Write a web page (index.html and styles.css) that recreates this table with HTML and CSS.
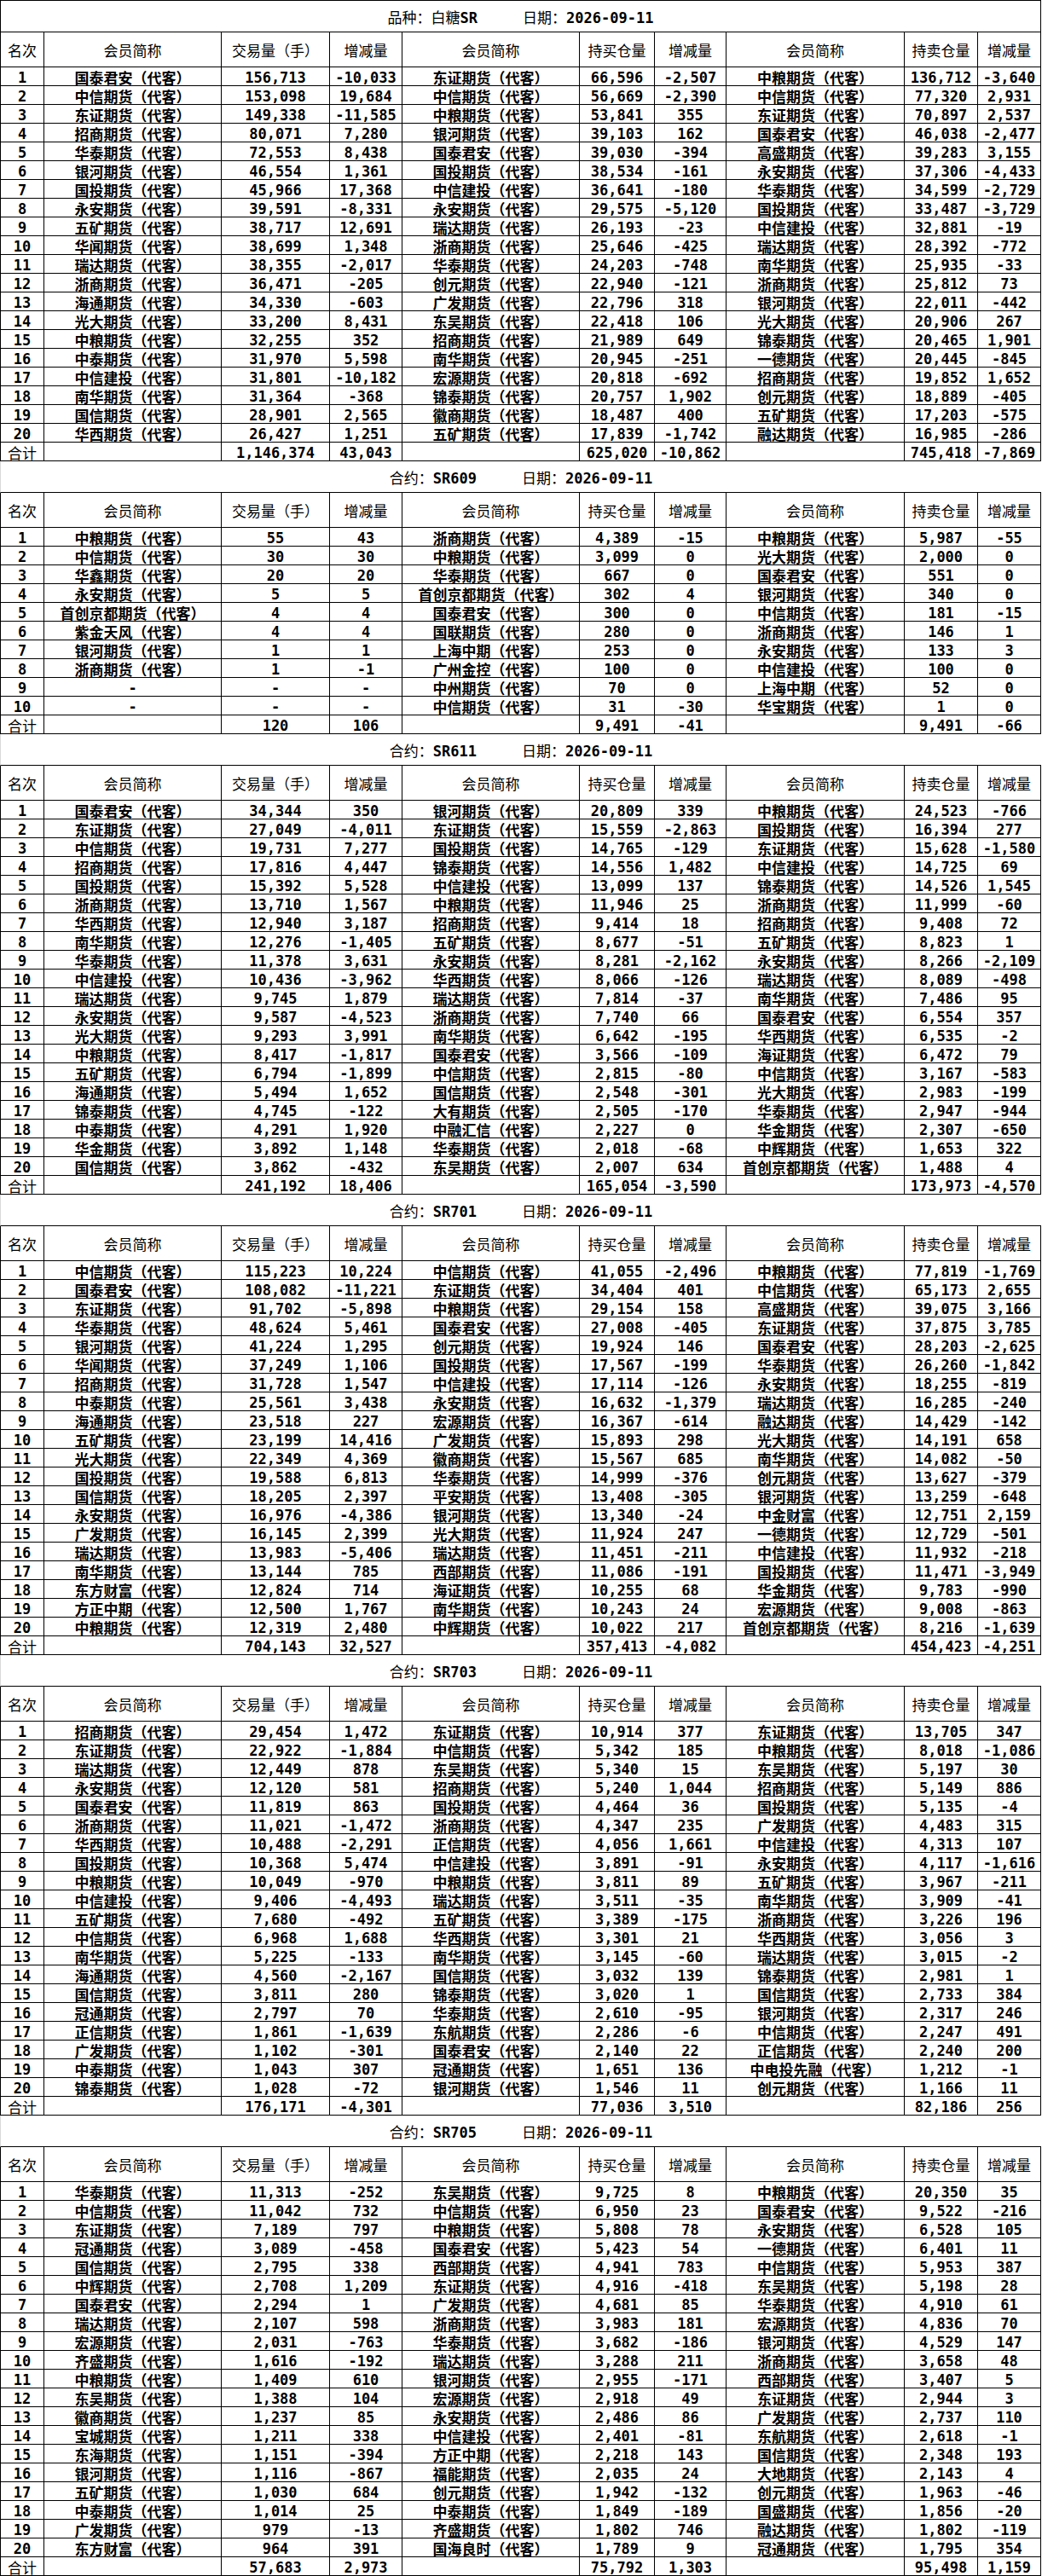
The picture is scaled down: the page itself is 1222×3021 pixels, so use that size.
FILE: index.html
```html
<!DOCTYPE html>
<html lang="zh-CN">
<head>
<meta charset="utf-8">
<title>白糖SR 会员持仓排名 2026-09-11</title>
<link rel="stylesheet" href="styles.css">
</head>
<body>
<div class="page">

<div class="t first">
<div class="ttl"><span>品种：白糖<b>SR</b></span><span>日期：<b>2026-09-11</b></span></div>
<div class="r h"><span>名次</span><span>会员简称</span><span>交易量（手）</span><span>增减量</span><span>会员简称</span><span>持买仓量</span><span>增减量</span><span>会员简称</span><span>持卖仓量</span><span>增减量</span></div>
<div class="r"><span>1</span><span>国泰君安（代客）</span><span>156,713</span><span>-10,033</span><span>东证期货（代客）</span><span>66,596</span><span>-2,507</span><span>中粮期货（代客）</span><span>136,712</span><span>-3,640</span></div>
<div class="r"><span>2</span><span>中信期货（代客）</span><span>153,098</span><span>19,684</span><span>中信期货（代客）</span><span>56,669</span><span>-2,390</span><span>中信期货（代客）</span><span>77,320</span><span>2,931</span></div>
<div class="r"><span>3</span><span>东证期货（代客）</span><span>149,338</span><span>-11,585</span><span>中粮期货（代客）</span><span>53,841</span><span>355</span><span>东证期货（代客）</span><span>70,897</span><span>2,537</span></div>
<div class="r"><span>4</span><span>招商期货（代客）</span><span>80,071</span><span>7,280</span><span>银河期货（代客）</span><span>39,103</span><span>162</span><span>国泰君安（代客）</span><span>46,038</span><span>-2,477</span></div>
<div class="r"><span>5</span><span>华泰期货（代客）</span><span>72,553</span><span>8,438</span><span>国泰君安（代客）</span><span>39,030</span><span>-394</span><span>高盛期货（代客）</span><span>39,283</span><span>3,155</span></div>
<div class="r"><span>6</span><span>银河期货（代客）</span><span>46,554</span><span>1,361</span><span>国投期货（代客）</span><span>38,534</span><span>-161</span><span>永安期货（代客）</span><span>37,306</span><span>-4,433</span></div>
<div class="r"><span>7</span><span>国投期货（代客）</span><span>45,966</span><span>17,368</span><span>中信建投（代客）</span><span>36,641</span><span>-180</span><span>华泰期货（代客）</span><span>34,599</span><span>-2,729</span></div>
<div class="r"><span>8</span><span>永安期货（代客）</span><span>39,591</span><span>-8,331</span><span>永安期货（代客）</span><span>29,575</span><span>-5,120</span><span>国投期货（代客）</span><span>33,487</span><span>-3,729</span></div>
<div class="r"><span>9</span><span>五矿期货（代客）</span><span>38,717</span><span>12,691</span><span>瑞达期货（代客）</span><span>26,193</span><span>-23</span><span>中信建投（代客）</span><span>32,881</span><span>-19</span></div>
<div class="r"><span>10</span><span>华闻期货（代客）</span><span>38,699</span><span>1,348</span><span>浙商期货（代客）</span><span>25,646</span><span>-425</span><span>瑞达期货（代客）</span><span>28,392</span><span>-772</span></div>
<div class="r"><span>11</span><span>瑞达期货（代客）</span><span>38,355</span><span>-2,017</span><span>华泰期货（代客）</span><span>24,203</span><span>-748</span><span>南华期货（代客）</span><span>25,935</span><span>-33</span></div>
<div class="r"><span>12</span><span>浙商期货（代客）</span><span>36,471</span><span>-205</span><span>创元期货（代客）</span><span>22,940</span><span>-121</span><span>浙商期货（代客）</span><span>25,812</span><span>73</span></div>
<div class="r"><span>13</span><span>海通期货（代客）</span><span>34,330</span><span>-603</span><span>广发期货（代客）</span><span>22,796</span><span>318</span><span>银河期货（代客）</span><span>22,011</span><span>-442</span></div>
<div class="r"><span>14</span><span>光大期货（代客）</span><span>33,200</span><span>8,431</span><span>东吴期货（代客）</span><span>22,418</span><span>106</span><span>光大期货（代客）</span><span>20,906</span><span>267</span></div>
<div class="r"><span>15</span><span>中粮期货（代客）</span><span>32,255</span><span>352</span><span>招商期货（代客）</span><span>21,989</span><span>649</span><span>锦泰期货（代客）</span><span>20,465</span><span>1,901</span></div>
<div class="r"><span>16</span><span>中泰期货（代客）</span><span>31,970</span><span>5,598</span><span>南华期货（代客）</span><span>20,945</span><span>-251</span><span>一德期货（代客）</span><span>20,445</span><span>-845</span></div>
<div class="r"><span>17</span><span>中信建投（代客）</span><span>31,801</span><span>-10,182</span><span>宏源期货（代客）</span><span>20,818</span><span>-692</span><span>招商期货（代客）</span><span>19,852</span><span>1,652</span></div>
<div class="r"><span>18</span><span>南华期货（代客）</span><span>31,364</span><span>-368</span><span>锦泰期货（代客）</span><span>20,757</span><span>1,902</span><span>创元期货（代客）</span><span>18,889</span><span>-405</span></div>
<div class="r"><span>19</span><span>国信期货（代客）</span><span>28,901</span><span>2,565</span><span>徽商期货（代客）</span><span>18,487</span><span>400</span><span>五矿期货（代客）</span><span>17,203</span><span>-575</span></div>
<div class="r"><span>20</span><span>华西期货（代客）</span><span>26,427</span><span>1,251</span><span>五矿期货（代客）</span><span>17,839</span><span>-1,742</span><span>融达期货（代客）</span><span>16,985</span><span>-286</span></div>
<div class="r s"><span>合计</span><span></span><span>1,146,374</span><span>43,043</span><span></span><span>625,020</span><span>-10,862</span><span></span><span>745,418</span><span>-7,869</span></div>
</div>

<div class="t">
<div class="ttl"><span>合约：<b>SR609</b></span><span>日期：<b>2026-09-11</b></span></div>
<div class="r h"><span>名次</span><span>会员简称</span><span>交易量（手）</span><span>增减量</span><span>会员简称</span><span>持买仓量</span><span>增减量</span><span>会员简称</span><span>持卖仓量</span><span>增减量</span></div>
<div class="r"><span>1</span><span>中粮期货（代客）</span><span>55</span><span>43</span><span>浙商期货（代客）</span><span>4,389</span><span>-15</span><span>中粮期货（代客）</span><span>5,987</span><span>-55</span></div>
<div class="r"><span>2</span><span>中信期货（代客）</span><span>30</span><span>30</span><span>中粮期货（代客）</span><span>3,099</span><span>0</span><span>光大期货（代客）</span><span>2,000</span><span>0</span></div>
<div class="r"><span>3</span><span>华鑫期货（代客）</span><span>20</span><span>20</span><span>华泰期货（代客）</span><span>667</span><span>0</span><span>国泰君安（代客）</span><span>551</span><span>0</span></div>
<div class="r"><span>4</span><span>永安期货（代客）</span><span>5</span><span>5</span><span>首创京都期货（代客）</span><span>302</span><span>4</span><span>银河期货（代客）</span><span>340</span><span>0</span></div>
<div class="r"><span>5</span><span>首创京都期货（代客）</span><span>4</span><span>4</span><span>国泰君安（代客）</span><span>300</span><span>0</span><span>中信期货（代客）</span><span>181</span><span>-15</span></div>
<div class="r"><span>6</span><span>紫金天风（代客）</span><span>4</span><span>4</span><span>国联期货（代客）</span><span>280</span><span>0</span><span>浙商期货（代客）</span><span>146</span><span>1</span></div>
<div class="r"><span>7</span><span>银河期货（代客）</span><span>1</span><span>1</span><span>上海中期（代客）</span><span>253</span><span>0</span><span>永安期货（代客）</span><span>133</span><span>3</span></div>
<div class="r"><span>8</span><span>浙商期货（代客）</span><span>1</span><span>-1</span><span>广州金控（代客）</span><span>100</span><span>0</span><span>中信建投（代客）</span><span>100</span><span>0</span></div>
<div class="r"><span>9</span><span class="dash">-</span><span>-</span><span>-</span><span>中州期货（代客）</span><span>70</span><span>0</span><span>上海中期（代客）</span><span>52</span><span>0</span></div>
<div class="r"><span>10</span><span class="dash">-</span><span>-</span><span>-</span><span>中信期货（代客）</span><span>31</span><span>-30</span><span>华宝期货（代客）</span><span>1</span><span>0</span></div>
<div class="r s"><span>合计</span><span></span><span>120</span><span>106</span><span></span><span>9,491</span><span>-41</span><span></span><span>9,491</span><span>-66</span></div>
</div>

<div class="t">
<div class="ttl"><span>合约：<b>SR611</b></span><span>日期：<b>2026-09-11</b></span></div>
<div class="r h"><span>名次</span><span>会员简称</span><span>交易量（手）</span><span>增减量</span><span>会员简称</span><span>持买仓量</span><span>增减量</span><span>会员简称</span><span>持卖仓量</span><span>增减量</span></div>
<div class="r"><span>1</span><span>国泰君安（代客）</span><span>34,344</span><span>350</span><span>银河期货（代客）</span><span>20,809</span><span>339</span><span>中粮期货（代客）</span><span>24,523</span><span>-766</span></div>
<div class="r"><span>2</span><span>东证期货（代客）</span><span>27,049</span><span>-4,011</span><span>东证期货（代客）</span><span>15,559</span><span>-2,863</span><span>国投期货（代客）</span><span>16,394</span><span>277</span></div>
<div class="r"><span>3</span><span>中信期货（代客）</span><span>19,731</span><span>7,277</span><span>国投期货（代客）</span><span>14,765</span><span>-129</span><span>东证期货（代客）</span><span>15,628</span><span>-1,580</span></div>
<div class="r"><span>4</span><span>招商期货（代客）</span><span>17,816</span><span>4,447</span><span>锦泰期货（代客）</span><span>14,556</span><span>1,482</span><span>中信建投（代客）</span><span>14,725</span><span>69</span></div>
<div class="r"><span>5</span><span>国投期货（代客）</span><span>15,392</span><span>5,528</span><span>中信建投（代客）</span><span>13,099</span><span>137</span><span>锦泰期货（代客）</span><span>14,526</span><span>1,545</span></div>
<div class="r"><span>6</span><span>浙商期货（代客）</span><span>13,710</span><span>1,567</span><span>中粮期货（代客）</span><span>11,946</span><span>25</span><span>浙商期货（代客）</span><span>11,999</span><span>-60</span></div>
<div class="r"><span>7</span><span>华西期货（代客）</span><span>12,940</span><span>3,187</span><span>招商期货（代客）</span><span>9,414</span><span>18</span><span>招商期货（代客）</span><span>9,408</span><span>72</span></div>
<div class="r"><span>8</span><span>南华期货（代客）</span><span>12,276</span><span>-1,405</span><span>五矿期货（代客）</span><span>8,677</span><span>-51</span><span>五矿期货（代客）</span><span>8,823</span><span>1</span></div>
<div class="r"><span>9</span><span>华泰期货（代客）</span><span>11,378</span><span>3,631</span><span>永安期货（代客）</span><span>8,281</span><span>-2,162</span><span>永安期货（代客）</span><span>8,266</span><span>-2,109</span></div>
<div class="r"><span>10</span><span>中信建投（代客）</span><span>10,436</span><span>-3,962</span><span>华西期货（代客）</span><span>8,066</span><span>-126</span><span>瑞达期货（代客）</span><span>8,089</span><span>-498</span></div>
<div class="r"><span>11</span><span>瑞达期货（代客）</span><span>9,745</span><span>1,879</span><span>瑞达期货（代客）</span><span>7,814</span><span>-37</span><span>南华期货（代客）</span><span>7,486</span><span>95</span></div>
<div class="r"><span>12</span><span>永安期货（代客）</span><span>9,587</span><span>-4,523</span><span>浙商期货（代客）</span><span>7,740</span><span>66</span><span>国泰君安（代客）</span><span>6,554</span><span>357</span></div>
<div class="r"><span>13</span><span>光大期货（代客）</span><span>9,293</span><span>3,991</span><span>南华期货（代客）</span><span>6,642</span><span>-195</span><span>华西期货（代客）</span><span>6,535</span><span>-2</span></div>
<div class="r"><span>14</span><span>中粮期货（代客）</span><span>8,417</span><span>-1,817</span><span>国泰君安（代客）</span><span>3,566</span><span>-109</span><span>海证期货（代客）</span><span>6,472</span><span>79</span></div>
<div class="r"><span>15</span><span>五矿期货（代客）</span><span>6,794</span><span>-1,899</span><span>中信期货（代客）</span><span>2,815</span><span>-80</span><span>中信期货（代客）</span><span>3,167</span><span>-583</span></div>
<div class="r"><span>16</span><span>海通期货（代客）</span><span>5,494</span><span>1,652</span><span>国信期货（代客）</span><span>2,548</span><span>-301</span><span>光大期货（代客）</span><span>2,983</span><span>-199</span></div>
<div class="r"><span>17</span><span>锦泰期货（代客）</span><span>4,745</span><span>-122</span><span>大有期货（代客）</span><span>2,505</span><span>-170</span><span>华泰期货（代客）</span><span>2,947</span><span>-944</span></div>
<div class="r"><span>18</span><span>中泰期货（代客）</span><span>4,291</span><span>1,920</span><span>中融汇信（代客）</span><span>2,227</span><span>0</span><span>华金期货（代客）</span><span>2,307</span><span>-650</span></div>
<div class="r"><span>19</span><span>华金期货（代客）</span><span>3,892</span><span>1,148</span><span>华泰期货（代客）</span><span>2,018</span><span>-68</span><span>中辉期货（代客）</span><span>1,653</span><span>322</span></div>
<div class="r"><span>20</span><span>国信期货（代客）</span><span>3,862</span><span>-432</span><span>东吴期货（代客）</span><span>2,007</span><span>634</span><span>首创京都期货（代客）</span><span>1,488</span><span>4</span></div>
<div class="r s"><span>合计</span><span></span><span>241,192</span><span>18,406</span><span></span><span>165,054</span><span>-3,590</span><span></span><span>173,973</span><span>-4,570</span></div>
</div>

<div class="t">
<div class="ttl"><span>合约：<b>SR701</b></span><span>日期：<b>2026-09-11</b></span></div>
<div class="r h"><span>名次</span><span>会员简称</span><span>交易量（手）</span><span>增减量</span><span>会员简称</span><span>持买仓量</span><span>增减量</span><span>会员简称</span><span>持卖仓量</span><span>增减量</span></div>
<div class="r"><span>1</span><span>中信期货（代客）</span><span>115,223</span><span>10,224</span><span>中信期货（代客）</span><span>41,055</span><span>-2,496</span><span>中粮期货（代客）</span><span>77,819</span><span>-1,769</span></div>
<div class="r"><span>2</span><span>国泰君安（代客）</span><span>108,082</span><span>-11,221</span><span>东证期货（代客）</span><span>34,404</span><span>401</span><span>中信期货（代客）</span><span>65,173</span><span>2,655</span></div>
<div class="r"><span>3</span><span>东证期货（代客）</span><span>91,702</span><span>-5,898</span><span>中粮期货（代客）</span><span>29,154</span><span>158</span><span>高盛期货（代客）</span><span>39,075</span><span>3,166</span></div>
<div class="r"><span>4</span><span>华泰期货（代客）</span><span>48,624</span><span>5,461</span><span>国泰君安（代客）</span><span>27,008</span><span>-405</span><span>东证期货（代客）</span><span>37,875</span><span>3,785</span></div>
<div class="r"><span>5</span><span>银河期货（代客）</span><span>41,224</span><span>1,295</span><span>创元期货（代客）</span><span>19,924</span><span>146</span><span>国泰君安（代客）</span><span>28,203</span><span>-2,625</span></div>
<div class="r"><span>6</span><span>华闻期货（代客）</span><span>37,249</span><span>1,106</span><span>国投期货（代客）</span><span>17,567</span><span>-199</span><span>华泰期货（代客）</span><span>26,260</span><span>-1,842</span></div>
<div class="r"><span>7</span><span>招商期货（代客）</span><span>31,728</span><span>1,547</span><span>中信建投（代客）</span><span>17,114</span><span>-126</span><span>永安期货（代客）</span><span>18,255</span><span>-819</span></div>
<div class="r"><span>8</span><span>中泰期货（代客）</span><span>25,561</span><span>3,438</span><span>永安期货（代客）</span><span>16,632</span><span>-1,379</span><span>瑞达期货（代客）</span><span>16,285</span><span>-240</span></div>
<div class="r"><span>9</span><span>海通期货（代客）</span><span>23,518</span><span>227</span><span>宏源期货（代客）</span><span>16,367</span><span>-614</span><span>融达期货（代客）</span><span>14,429</span><span>-142</span></div>
<div class="r"><span>10</span><span>五矿期货（代客）</span><span>23,199</span><span>14,416</span><span>广发期货（代客）</span><span>15,893</span><span>298</span><span>光大期货（代客）</span><span>14,191</span><span>658</span></div>
<div class="r"><span>11</span><span>光大期货（代客）</span><span>22,349</span><span>4,369</span><span>徽商期货（代客）</span><span>15,567</span><span>685</span><span>南华期货（代客）</span><span>14,082</span><span>-50</span></div>
<div class="r"><span>12</span><span>国投期货（代客）</span><span>19,588</span><span>6,813</span><span>华泰期货（代客）</span><span>14,999</span><span>-376</span><span>创元期货（代客）</span><span>13,627</span><span>-379</span></div>
<div class="r"><span>13</span><span>国信期货（代客）</span><span>18,205</span><span>2,397</span><span>平安期货（代客）</span><span>13,408</span><span>-305</span><span>银河期货（代客）</span><span>13,259</span><span>-648</span></div>
<div class="r"><span>14</span><span>永安期货（代客）</span><span>16,976</span><span>-4,386</span><span>银河期货（代客）</span><span>13,340</span><span>-24</span><span>中金财富（代客）</span><span>12,751</span><span>2,159</span></div>
<div class="r"><span>15</span><span>广发期货（代客）</span><span>16,145</span><span>2,399</span><span>光大期货（代客）</span><span>11,924</span><span>247</span><span>一德期货（代客）</span><span>12,729</span><span>-501</span></div>
<div class="r"><span>16</span><span>瑞达期货（代客）</span><span>13,983</span><span>-5,406</span><span>瑞达期货（代客）</span><span>11,451</span><span>-211</span><span>中信建投（代客）</span><span>11,932</span><span>-218</span></div>
<div class="r"><span>17</span><span>南华期货（代客）</span><span>13,144</span><span>785</span><span>西部期货（代客）</span><span>11,086</span><span>-191</span><span>国投期货（代客）</span><span>11,471</span><span>-3,949</span></div>
<div class="r"><span>18</span><span>东方财富（代客）</span><span>12,824</span><span>714</span><span>海证期货（代客）</span><span>10,255</span><span>68</span><span>华金期货（代客）</span><span>9,783</span><span>-990</span></div>
<div class="r"><span>19</span><span>方正中期（代客）</span><span>12,500</span><span>1,767</span><span>南华期货（代客）</span><span>10,243</span><span>24</span><span>宏源期货（代客）</span><span>9,008</span><span>-863</span></div>
<div class="r"><span>20</span><span>中粮期货（代客）</span><span>12,319</span><span>2,480</span><span>中辉期货（代客）</span><span>10,022</span><span>217</span><span>首创京都期货（代客）</span><span>8,216</span><span>-1,639</span></div>
<div class="r s"><span>合计</span><span></span><span>704,143</span><span>32,527</span><span></span><span>357,413</span><span>-4,082</span><span></span><span>454,423</span><span>-4,251</span></div>
</div>

<div class="t">
<div class="ttl"><span>合约：<b>SR703</b></span><span>日期：<b>2026-09-11</b></span></div>
<div class="r h"><span>名次</span><span>会员简称</span><span>交易量（手）</span><span>增减量</span><span>会员简称</span><span>持买仓量</span><span>增减量</span><span>会员简称</span><span>持卖仓量</span><span>增减量</span></div>
<div class="r"><span>1</span><span>招商期货（代客）</span><span>29,454</span><span>1,472</span><span>东证期货（代客）</span><span>10,914</span><span>377</span><span>东证期货（代客）</span><span>13,705</span><span>347</span></div>
<div class="r"><span>2</span><span>东证期货（代客）</span><span>22,922</span><span>-1,884</span><span>中信期货（代客）</span><span>5,342</span><span>185</span><span>中粮期货（代客）</span><span>8,018</span><span>-1,086</span></div>
<div class="r"><span>3</span><span>瑞达期货（代客）</span><span>12,449</span><span>878</span><span>东吴期货（代客）</span><span>5,340</span><span>15</span><span>东吴期货（代客）</span><span>5,197</span><span>30</span></div>
<div class="r"><span>4</span><span>永安期货（代客）</span><span>12,120</span><span>581</span><span>招商期货（代客）</span><span>5,240</span><span>1,044</span><span>招商期货（代客）</span><span>5,149</span><span>886</span></div>
<div class="r"><span>5</span><span>国泰君安（代客）</span><span>11,819</span><span>863</span><span>国投期货（代客）</span><span>4,464</span><span>36</span><span>国投期货（代客）</span><span>5,135</span><span>-4</span></div>
<div class="r"><span>6</span><span>浙商期货（代客）</span><span>11,021</span><span>-1,472</span><span>浙商期货（代客）</span><span>4,347</span><span>235</span><span>广发期货（代客）</span><span>4,483</span><span>315</span></div>
<div class="r"><span>7</span><span>华西期货（代客）</span><span>10,488</span><span>-2,291</span><span>正信期货（代客）</span><span>4,056</span><span>1,661</span><span>中信建投（代客）</span><span>4,313</span><span>107</span></div>
<div class="r"><span>8</span><span>国投期货（代客）</span><span>10,368</span><span>5,474</span><span>中信建投（代客）</span><span>3,891</span><span>-91</span><span>永安期货（代客）</span><span>4,117</span><span>-1,616</span></div>
<div class="r"><span>9</span><span>中粮期货（代客）</span><span>10,049</span><span>-970</span><span>中粮期货（代客）</span><span>3,811</span><span>89</span><span>五矿期货（代客）</span><span>3,967</span><span>-211</span></div>
<div class="r"><span>10</span><span>中信建投（代客）</span><span>9,406</span><span>-4,493</span><span>瑞达期货（代客）</span><span>3,511</span><span>-35</span><span>南华期货（代客）</span><span>3,909</span><span>-41</span></div>
<div class="r"><span>11</span><span>五矿期货（代客）</span><span>7,680</span><span>-492</span><span>五矿期货（代客）</span><span>3,389</span><span>-175</span><span>浙商期货（代客）</span><span>3,226</span><span>196</span></div>
<div class="r"><span>12</span><span>中信期货（代客）</span><span>6,968</span><span>1,688</span><span>华西期货（代客）</span><span>3,301</span><span>21</span><span>华西期货（代客）</span><span>3,056</span><span>3</span></div>
<div class="r"><span>13</span><span>南华期货（代客）</span><span>5,225</span><span>-133</span><span>南华期货（代客）</span><span>3,145</span><span>-60</span><span>瑞达期货（代客）</span><span>3,015</span><span>-2</span></div>
<div class="r"><span>14</span><span>海通期货（代客）</span><span>4,560</span><span>-2,167</span><span>国信期货（代客）</span><span>3,032</span><span>139</span><span>锦泰期货（代客）</span><span>2,981</span><span>1</span></div>
<div class="r"><span>15</span><span>国信期货（代客）</span><span>3,811</span><span>280</span><span>锦泰期货（代客）</span><span>3,020</span><span>1</span><span>国信期货（代客）</span><span>2,733</span><span>384</span></div>
<div class="r"><span>16</span><span>冠通期货（代客）</span><span>2,797</span><span>70</span><span>华泰期货（代客）</span><span>2,610</span><span>-95</span><span>银河期货（代客）</span><span>2,317</span><span>246</span></div>
<div class="r"><span>17</span><span>正信期货（代客）</span><span>1,861</span><span>-1,639</span><span>东航期货（代客）</span><span>2,286</span><span>-6</span><span>中信期货（代客）</span><span>2,247</span><span>491</span></div>
<div class="r"><span>18</span><span>广发期货（代客）</span><span>1,102</span><span>-301</span><span>国泰君安（代客）</span><span>2,140</span><span>22</span><span>正信期货（代客）</span><span>2,240</span><span>200</span></div>
<div class="r"><span>19</span><span>中泰期货（代客）</span><span>1,043</span><span>307</span><span>冠通期货（代客）</span><span>1,651</span><span>136</span><span>中电投先融（代客）</span><span>1,212</span><span>-1</span></div>
<div class="r"><span>20</span><span>锦泰期货（代客）</span><span>1,028</span><span>-72</span><span>银河期货（代客）</span><span>1,546</span><span>11</span><span>创元期货（代客）</span><span>1,166</span><span>11</span></div>
<div class="r s"><span>合计</span><span></span><span>176,171</span><span>-4,301</span><span></span><span>77,036</span><span>3,510</span><span></span><span>82,186</span><span>256</span></div>
</div>

<div class="t">
<div class="ttl"><span>合约：<b>SR705</b></span><span>日期：<b>2026-09-11</b></span></div>
<div class="r h"><span>名次</span><span>会员简称</span><span>交易量（手）</span><span>增减量</span><span>会员简称</span><span>持买仓量</span><span>增减量</span><span>会员简称</span><span>持卖仓量</span><span>增减量</span></div>
<div class="r"><span>1</span><span>华泰期货（代客）</span><span>11,313</span><span>-252</span><span>东吴期货（代客）</span><span>9,725</span><span>8</span><span>中粮期货（代客）</span><span>20,350</span><span>35</span></div>
<div class="r"><span>2</span><span>中信期货（代客）</span><span>11,042</span><span>732</span><span>中信期货（代客）</span><span>6,950</span><span>23</span><span>国泰君安（代客）</span><span>9,522</span><span>-216</span></div>
<div class="r"><span>3</span><span>东证期货（代客）</span><span>7,189</span><span>797</span><span>中粮期货（代客）</span><span>5,808</span><span>78</span><span>永安期货（代客）</span><span>6,528</span><span>105</span></div>
<div class="r"><span>4</span><span>冠通期货（代客）</span><span>3,089</span><span>-458</span><span>国泰君安（代客）</span><span>5,423</span><span>54</span><span>一德期货（代客）</span><span>6,401</span><span>11</span></div>
<div class="r"><span>5</span><span>国信期货（代客）</span><span>2,795</span><span>338</span><span>西部期货（代客）</span><span>4,941</span><span>783</span><span>中信期货（代客）</span><span>5,953</span><span>387</span></div>
<div class="r"><span>6</span><span>中辉期货（代客）</span><span>2,708</span><span>1,209</span><span>东证期货（代客）</span><span>4,916</span><span>-418</span><span>东吴期货（代客）</span><span>5,198</span><span>28</span></div>
<div class="r"><span>7</span><span>国泰君安（代客）</span><span>2,294</span><span>1</span><span>广发期货（代客）</span><span>4,681</span><span>85</span><span>华泰期货（代客）</span><span>4,910</span><span>61</span></div>
<div class="r"><span>8</span><span>瑞达期货（代客）</span><span>2,107</span><span>598</span><span>浙商期货（代客）</span><span>3,983</span><span>181</span><span>宏源期货（代客）</span><span>4,836</span><span>70</span></div>
<div class="r"><span>9</span><span>宏源期货（代客）</span><span>2,031</span><span>-763</span><span>华泰期货（代客）</span><span>3,682</span><span>-186</span><span>银河期货（代客）</span><span>4,529</span><span>147</span></div>
<div class="r"><span>10</span><span>齐盛期货（代客）</span><span>1,616</span><span>-192</span><span>瑞达期货（代客）</span><span>3,288</span><span>211</span><span>浙商期货（代客）</span><span>3,658</span><span>48</span></div>
<div class="r"><span>11</span><span>中粮期货（代客）</span><span>1,409</span><span>610</span><span>银河期货（代客）</span><span>2,955</span><span>-171</span><span>西部期货（代客）</span><span>3,407</span><span>5</span></div>
<div class="r"><span>12</span><span>东吴期货（代客）</span><span>1,388</span><span>104</span><span>宏源期货（代客）</span><span>2,918</span><span>49</span><span>东证期货（代客）</span><span>2,944</span><span>3</span></div>
<div class="r"><span>13</span><span>徽商期货（代客）</span><span>1,237</span><span>85</span><span>永安期货（代客）</span><span>2,486</span><span>86</span><span>广发期货（代客）</span><span>2,737</span><span>110</span></div>
<div class="r"><span>14</span><span>宝城期货（代客）</span><span>1,211</span><span>338</span><span>中信建投（代客）</span><span>2,401</span><span>-81</span><span>东航期货（代客）</span><span>2,618</span><span>-1</span></div>
<div class="r"><span>15</span><span>东海期货（代客）</span><span>1,151</span><span>-394</span><span>方正中期（代客）</span><span>2,218</span><span>143</span><span>国信期货（代客）</span><span>2,348</span><span>193</span></div>
<div class="r"><span>16</span><span>银河期货（代客）</span><span>1,116</span><span>-867</span><span>福能期货（代客）</span><span>2,035</span><span>24</span><span>大地期货（代客）</span><span>2,143</span><span>4</span></div>
<div class="r"><span>17</span><span>五矿期货（代客）</span><span>1,030</span><span>684</span><span>创元期货（代客）</span><span>1,942</span><span>-132</span><span>创元期货（代客）</span><span>1,963</span><span>-46</span></div>
<div class="r"><span>18</span><span>中泰期货（代客）</span><span>1,014</span><span>25</span><span>中泰期货（代客）</span><span>1,849</span><span>-189</span><span>国盛期货（代客）</span><span>1,856</span><span>-20</span></div>
<div class="r"><span>19</span><span>广发期货（代客）</span><span>979</span><span>-13</span><span>齐盛期货（代客）</span><span>1,802</span><span>746</span><span>融达期货（代客）</span><span>1,802</span><span>-119</span></div>
<div class="r"><span>20</span><span>东方财富（代客）</span><span>964</span><span>391</span><span>国海良时（代客）</span><span>1,789</span><span>9</span><span>冠通期货（代客）</span><span>1,795</span><span>354</span></div>
<div class="r s"><span>合计</span><span></span><span>57,683</span><span>2,973</span><span></span><span>75,792</span><span>1,303</span><span></span><span>95,498</span><span>1,159</span></div>
</div>

</div>
</body>
</html>
```

FILE: styles.css
```css
html, body {
  margin: 0;
  padding: 0;
  background: #ffffff;
}

body {
  font-family: "Noto Sans CJK SC", "Noto Sans", sans-serif;
  font-size: 17px;
  color: #000000;
}

.page {
  width: 1222px;
}

.t {
  display: grid;
  grid-template-columns: 52px 208px 127px 85px 208px 88px 84px 209px 86px 74px;
  grid-template-rows: 37px 41px;
  grid-auto-rows: 22px;
  width: 1221px;
}

.t.first {
  grid-template-rows: 38px 41px;
}

.ttl {
  grid-column: 1 / -1;
  display: flex;
  justify-content: center;
  align-items: center;
  gap: 53px;
  box-sizing: border-box;
  border-bottom: 1px solid #000;
  border-left: 1px solid #d9d9d9;
  white-space: nowrap;
  padding-top: 1px;
}

.t.first .ttl {
  border: 1px solid #000;
}

.ttl b {
  font-family: "DejaVu Sans Mono", monospace;
  font-weight: 700;
}

.r {
  display: contents;
}

.r > span {
  display: flex;
  align-items: center;
  justify-content: center;
  box-sizing: border-box;
  border-right: 1px solid #000;
  border-bottom: 1px solid #000;
  white-space: nowrap;
  overflow: hidden;
  padding-top: 1px;
  font-weight: 700;
}

.r > span:first-child {
  border-left: 1px solid #000;
}

.r > span:nth-child(1),
.r > span:nth-child(3),
.r > span:nth-child(4),
.r > span:nth-child(6),
.r > span:nth-child(7),
.r > span:nth-child(9),
.r > span:nth-child(10),
.r > span.dash {
  font-family: "DejaVu Sans Mono", "Noto Sans CJK SC", monospace;
  font-weight: 700;
  padding-top: 3px;
}

.r.h > span,
.r.h > span:nth-child(n),
.r.s > span:first-child {
  font-family: "Noto Sans CJK SC", "Noto Sans", sans-serif;
  font-weight: 400;
  padding-top: 1px;
}
```
